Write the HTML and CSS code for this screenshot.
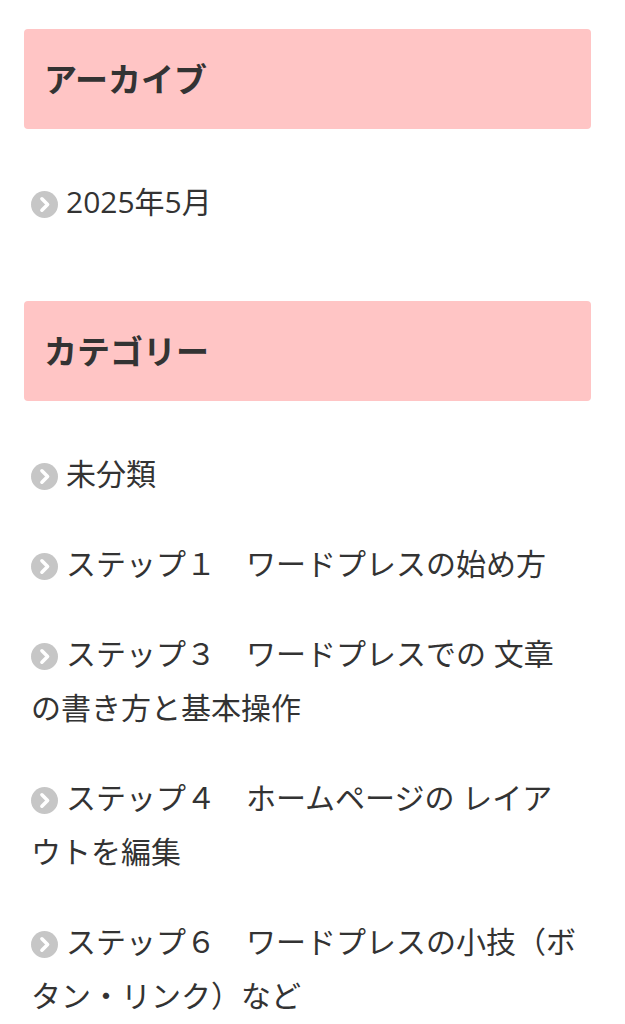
FILE: index.html
```html
<!DOCTYPE html>
<html lang="ja">
<head>
<meta charset="utf-8">
<title>Sidebar</title>
<link rel="stylesheet" href="styles.css">
</head>
<body>
<aside class="sidebar">
  <section class="widget">
    <h2 class="widget-title">アーカイブ</h2>
    <ul class="widget-list">
      <li><a href="#"><svg class="chev" viewBox="0 0 26 26" aria-hidden="true"><circle cx="13" cy="13" r="13"/><path d="M10.5 7.5 L16 13 L10.5 18.5"/></svg>2025年5月</a></li>
    </ul>
  </section>
  <section class="widget">
    <h2 class="widget-title">カテゴリー</h2>
    <ul class="widget-list">
      <li><a href="#"><svg class="chev" viewBox="0 0 26 26" aria-hidden="true"><circle cx="13" cy="13" r="13"/><path d="M10.5 7.5 L16 13 L10.5 18.5"/></svg>未分類</a></li>
      <li><a href="#"><svg class="chev" viewBox="0 0 26 26" aria-hidden="true"><circle cx="13" cy="13" r="13"/><path d="M10.5 7.5 L16 13 L10.5 18.5"/></svg>ステップ１　ワードプレスの始め方</a></li>
      <li><a href="#"><svg class="chev" viewBox="0 0 26 26" aria-hidden="true"><circle cx="13" cy="13" r="13"/><path d="M10.5 7.5 L16 13 L10.5 18.5"/></svg>ステップ３　ワードプレスでの 文章の書き方と基本操作</a></li>
      <li><a href="#"><svg class="chev" viewBox="0 0 26 26" aria-hidden="true"><circle cx="13" cy="13" r="13"/><path d="M10.5 7.5 L16 13 L10.5 18.5"/></svg>ステップ４　ホームページの レイアウトを編集</a></li>
      <li><a href="#"><svg class="chev" viewBox="0 0 26 26" aria-hidden="true"><circle cx="13" cy="13" r="13"/><path d="M10.5 7.5 L16 13 L10.5 18.5"/></svg>ステップ６　ワードプレスの小技（ボタン・リンク）など</a></li>
    </ul>
  </section>
</aside>
</body>
</html>
```

FILE: styles.css
```css
* { box-sizing: border-box; }
html, body { margin: 0; padding: 0; background: #fff; }
body {
  font-family: "Open Sans", "Noto Sans CJK JP", sans-serif;
  color: #333;
}
.sidebar {
  padding: 29px 34px 0 24px;
  width: 625px;
}
.widget { margin-bottom: 72px; }
.widget-title {
  margin: 0;
  background: #ffc5c5;
  border-radius: 4px;
  font-family: "Noto Sans CJK JP", sans-serif;
  font-size: 33px;
  font-weight: 700;
  line-height: 48px;
  padding: 25px 20px 27px;
  color: #333;
}
.widget-list {
  list-style: none;
  margin: 46px 0 0;
  padding: 0 12px 0 7px;
}
.widget-list li {
  font-size: 30px;
  line-height: 54px;
  margin-bottom: 36px;
}
.widget-list li:last-child { margin-bottom: 0; }
.widget-list a {
  color: #333;
  text-decoration: none;
}
.chev {
  display: inline-block;
  width: 27px;
  height: 27px;
  margin-right: 8px;
  vertical-align: -5px;
}
.chev circle { fill: #c6c6c6; }
.chev path {
  fill: none;
  stroke: #fff;
  stroke-width: 3.4;
  stroke-linecap: round;
  stroke-linejoin: round;
}
```
